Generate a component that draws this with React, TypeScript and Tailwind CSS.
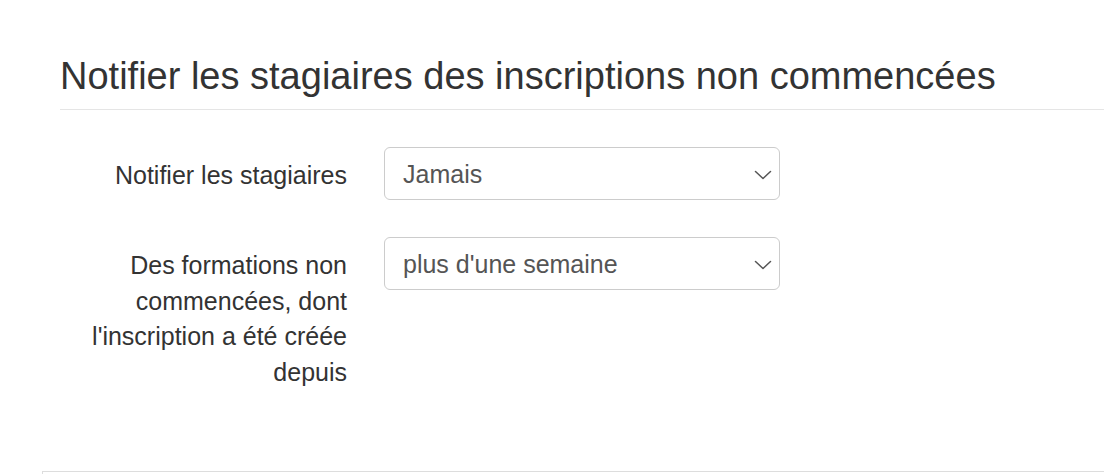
import React from 'react';

const Chevron = () => (
  <svg width="18" height="10" viewBox="0 0 18 10" fill="none" className="text-[#555]">
    <path d="M1.5 1.5 9 8.5l7.5-7" stroke="currentColor" strokeWidth="1.5" strokeLinecap="round" strokeLinejoin="round" />
  </svg>
);

const Select = ({ value }: { value: string }) => (
  <div className="flex h-[53px] w-[396px] items-center justify-between rounded-[6px] border border-[#ccc] bg-white pl-[18px] pr-[7px] pt-[3px] text-[25px] text-[#555]">
    <span>{value}</span>
    <Chevron />
  </div>
);

const App = () => {
  return (
    <div className="h-[474px] w-[1104px] bg-white font-['Liberation_Sans',Arial,sans-serif] text-[#333]">
      <div className="pl-[60px] pt-[54px]">
        <h2 className="border-b border-[#e5e5e5] pb-[11px] text-[38px] leading-[44px]">
          Notifier les stagiaires des inscriptions non commencées
        </h2>
      </div>
      <div className="mt-[37px] space-y-[37px]">
        <div className="flex items-start">
          <label className="w-[347px] pt-[10px] text-right text-[25px] leading-[36px]">
            Notifier les stagiaires
          </label>
          <div className="ml-[37px]">
            <Select value="Jamais" />
          </div>
        </div>
        <div className="flex items-start">
          <label className="w-[347px] pl-[70px] pt-[11px] text-right text-[25px] leading-[35.5px]">
            Des formations non commencées, dont l'inscription a été créée depuis
          </label>
          <div className="ml-[37px]">
            <Select value="plus d'une semaine" />
          </div>
        </div>
      </div>
      <div className="ml-[42px] mt-[81px] h-[3px] border-l border-t border-[#ddd]" />
    </div>
  );
};

export default App;
